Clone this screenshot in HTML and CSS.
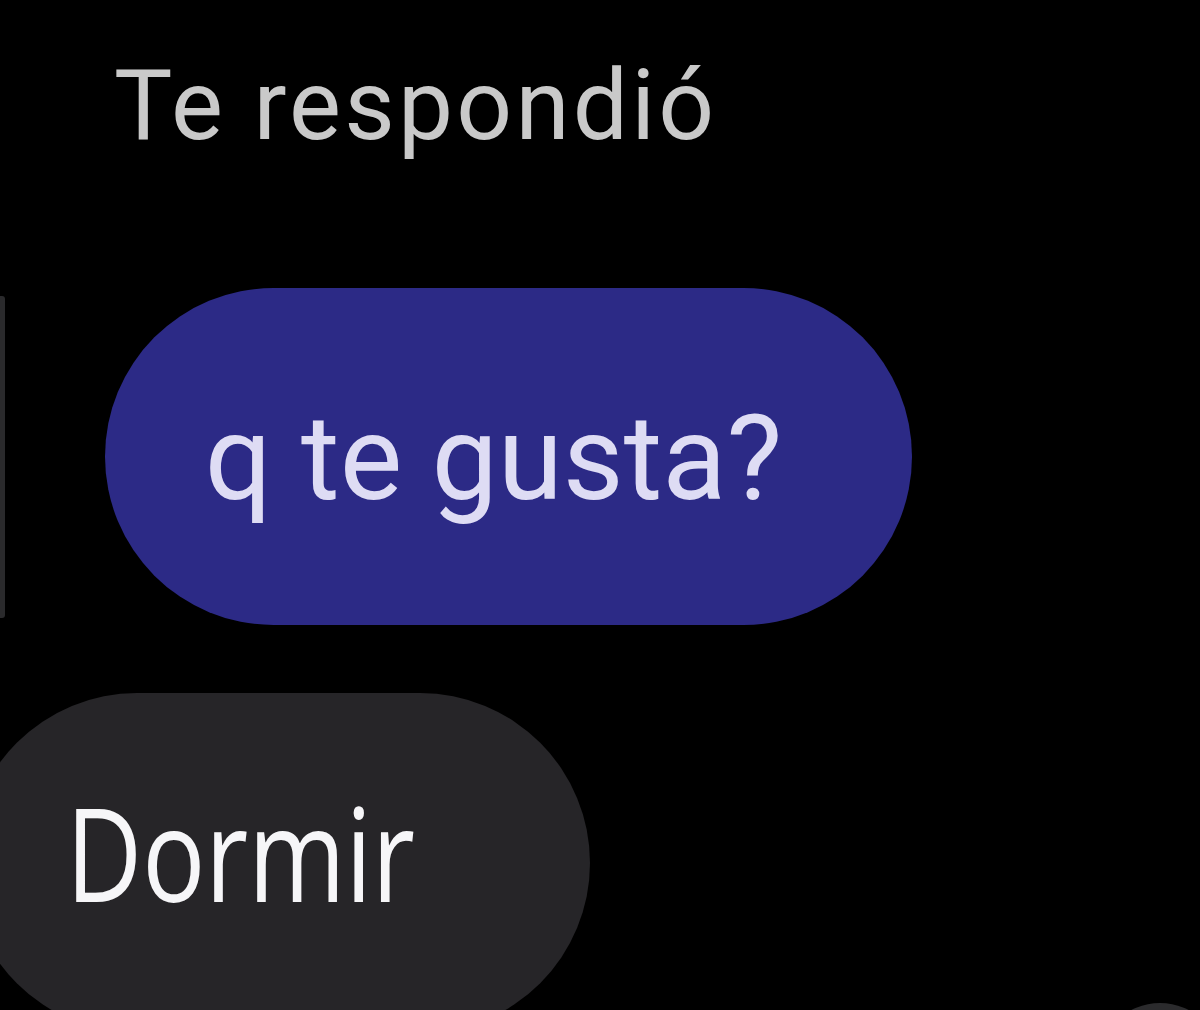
FILE: index.html
```html
<!DOCTYPE html>
<html lang="es">
<head>
<meta charset="utf-8">
<title>Te respondió</title>
<link rel="stylesheet" href="styles.css">
</head>
<body>
<main class="screen">
  <header class="title">Te respondió</header>
  <div class="row row-reply">
    <div class="edge-strip"></div>
    <div class="bubble bubble-blue"><span class="bubble-text">q te gusta?</span></div>
  </div>
  <div class="row row-mine">
    <div class="bubble bubble-grey"><span class="dormir">Dormir</span></div>
    <div class="corner-arc"></div>
  </div>
</main>
</body>
</html>
```
FILE: styles.css
```css
html, body {
  margin: 0;
  padding: 0;
  background: #000;
}
body {
  width: 1200px;
  height: 1010px;
  overflow: hidden;
}
.screen {
  display: flex;
  flex-direction: column;
  height: 1010px;
  overflow: hidden;
}
.title {
  font-family: Roboto, "Liberation Sans", sans-serif;
  font-size: 98px;
  line-height: 120px;
  color: #c9c9c9;
  padding-left: 114px;
  margin-top: 46px;
  letter-spacing: 3.2px;
}
.row {
  display: flex;
  flex-shrink: 0;
}
.row-reply {
  margin-top: 122px;
  align-items: center;
}
.edge-strip {
  width: 5px;
  height: 322px;
  background: #2a2a2c;
  border-radius: 0 3px 3px 0;
}
.bubble {
  display: flex;
  align-items: center;
  flex-shrink: 0;
}
.bubble-blue {
  margin-left: 100px;
  width: 807px;
  height: 337px;
  border-radius: 169px;
  background: #2c2a86;
  justify-content: center;
}
.bubble-text {
  font-family: Roboto, "Liberation Sans", sans-serif;
  font-size: 118px;
  color: #dedcf4;
  margin-left: -30px;
  margin-top: 4px;
}
.row-mine {
  margin-top: 68px;
  align-items: flex-start;
}
.bubble-grey {
  margin-left: -33px;
  width: 623px;
  height: 340px;
  border-radius: 170px;
  background: #262528;
  padding-left: 99px;
  box-sizing: border-box;
}
.dormir {
  font-family: "Open Sans", "Liberation Sans", sans-serif;
  font-size: 105px;
  color: #f6f6f8;
  display: inline-block;
  transform: scaleY(1.23);
  margin-top: -22px;
}
.corner-arc {
  margin-left: auto;
  margin-right: -22px;
  margin-top: 310px;
  width: 124px;
  height: 124px;
  border-radius: 50%;
  background: #2b2b2d;
}
```
